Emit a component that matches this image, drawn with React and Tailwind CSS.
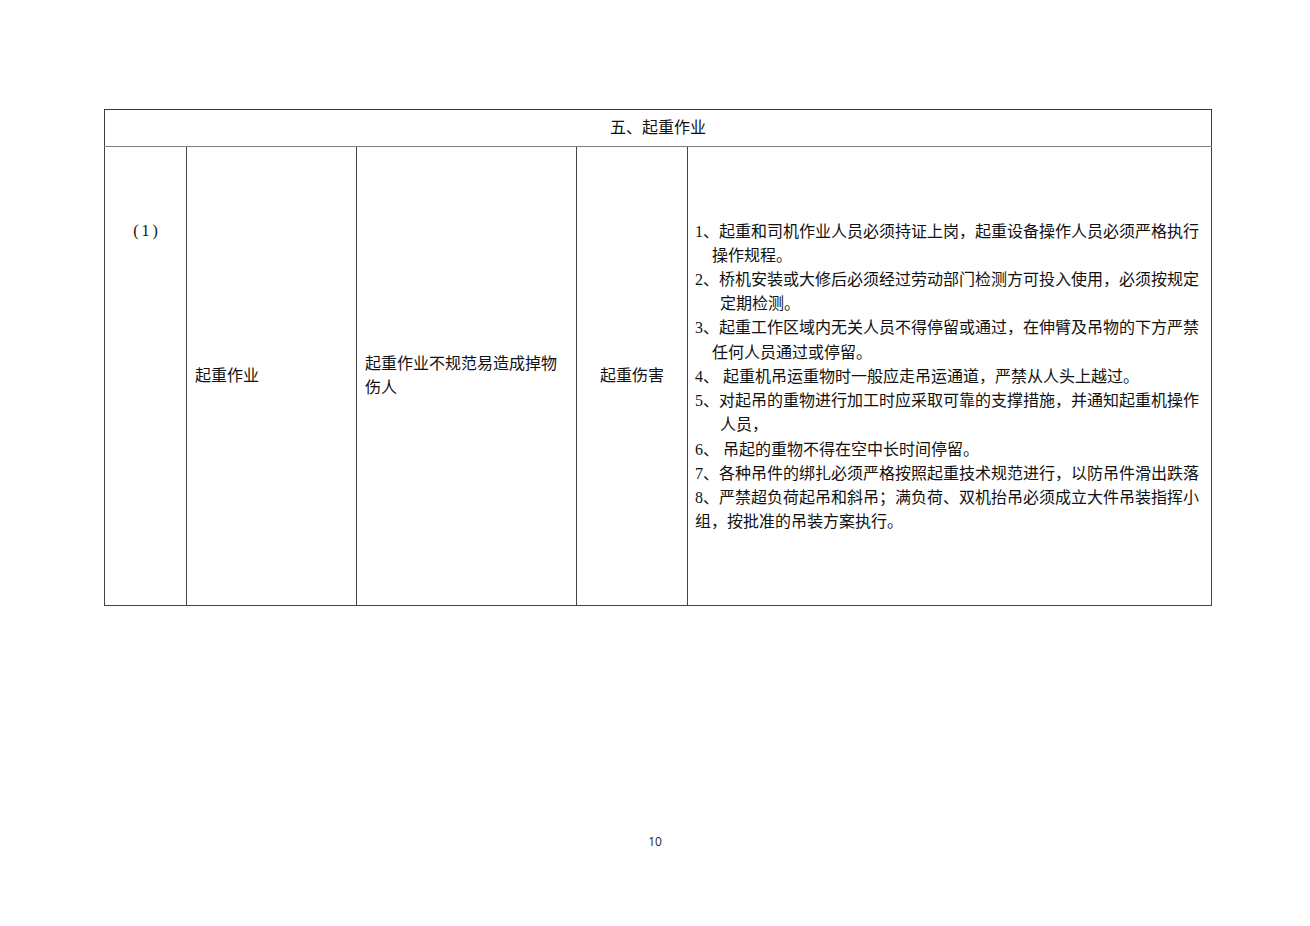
import React from "react";

const measures = [
  { lead: "1、起重和司机作业人员必须持证上岗，起重设备操作人员必须严格执行", rest: "操作规程。", indent: "pl-[17px]" },
  { lead: "2、桥机安装或大修后必须经过劳动部门检测方可投入使用，必须按规定", rest: "定期检测。", indent: "pl-[25px]" },
  { lead: "3、起重工作区域内无关人员不得停留或通过，在伸臂及吊物的下方严禁", rest: "任何人员通过或停留。", indent: "pl-[17px]" },
  { lead: "4、 起重机吊运重物时一般应走吊运通道，严禁从人头上越过。" },
  { lead: "5、对起吊的重物进行加工时应采取可靠的支撑措施，并通知起重机操作", rest: "人员，", indent: "pl-[25px]" },
  { lead: "6、 吊起的重物不得在空中长时间停留。" },
  { lead: "7、各种吊件的绑扎必须严格按照起重技术规范进行，以防吊件滑出跌落" },
  { lead: "8、严禁超负荷起吊和斜吊；满负荷、双机抬吊必须成立大件吊装指挥小", rest: "组，按批准的吊装方案执行。", indent: "pl-0" },
];

export default function App() {
  return (
    <div className="min-h-[926px] w-[1310px] bg-white text-[#111] font-['Liberation_Serif','Noto_Sans_CJK_SC',serif]">
      <div className="pt-[109px] pl-[104px]">
        <table className="border-collapse table-fixed w-[1107px] text-[16px] leading-[24.2px]">
          <colgroup>
            <col className="w-[82px]" />
            <col className="w-[170px]" />
            <col className="w-[220px]" />
            <col className="w-[111px]" />
            <col className="w-[524px]" />
          </colgroup>
          <tbody>
            <tr className="h-[37px]">
              <td colSpan={5} className="border border-[#3a3a3a] border-b-[#808080] text-center align-middle">
                五、起重作业
              </td>
            </tr>
            <tr className="h-[459px]">
              <td className="border border-[#444] align-top text-center pt-[72px]">
                <span className="inline-flex items-center gap-[3px]">
                  <span>(</span>
                  <span>1</span>
                  <span>)</span>
                </span>
              </td>
              <td className="border border-[#444] align-middle pl-[8px]">起重作业</td>
              <td className="border border-[#444] align-middle pl-[8px] pr-[10px]">
                起重作业不规范易造成掉物伤人
              </td>
              <td className="border border-[#444] align-middle text-center">起重伤害</td>
              <td className="border border-[#444] align-middle pl-[7px] pt-[2px]">
                {measures.map((m, i) => (
                  <div key={i}>
                    <div className="whitespace-nowrap">{m.lead}</div>
                    {m.rest && <div className={"whitespace-nowrap " + m.indent}>{m.rest}</div>}
                  </div>
                ))}
              </td>
            </tr>
          </tbody>
        </table>
      </div>
      <div className="mt-[228px] text-center text-[12px] leading-[16px] font-['Open_Sans','Liberation_Sans',sans-serif] text-[#222]">
        10
      </div>
    </div>
  );
}
